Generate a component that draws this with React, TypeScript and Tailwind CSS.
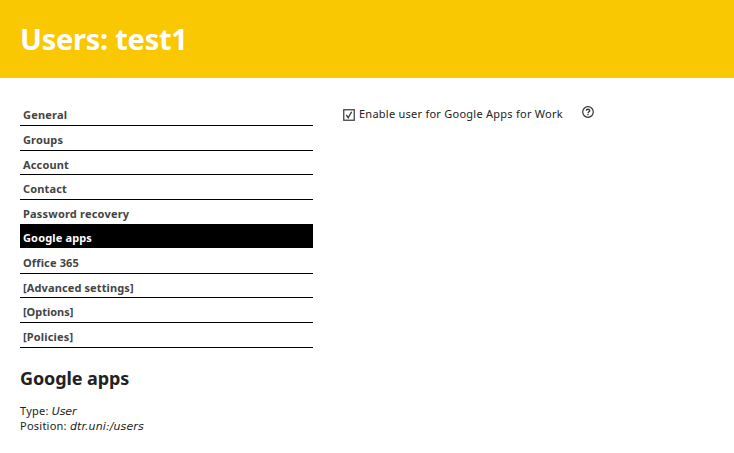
type Item = { label: string; row: string; text: string; active?: boolean };

const items: Item[] = [
  { label: "General", row: "h-[25px] pb-[2px]", text: "tracking-[0.2px]" },
  { label: "Groups", row: "h-[25px] pb-[2px]", text: "tracking-[0.15px]" },
  { label: "Account", row: "h-[24px] pb-[1px]", text: "tracking-[0.15px]" },
  { label: "Contact", row: "h-[25px] pb-[2px]", text: "tracking-[0.15px]" },
  { label: "Password recovery", row: "h-[24px] pb-[2px] border-b-0", text: "tracking-[0.2px]" },
  { label: "Google apps", row: "h-[24px] pb-[2px] mb-px border-b-0", text: "tracking-[0.15px]", active: true },
  { label: "Office 365", row: "h-[25px] pb-[2px]", text: "tracking-[0.15px]" },
  { label: "[Advanced settings]", row: "h-[24px] pb-[1px]", text: "tracking-[0.12px]" },
  { label: "[Options]", row: "h-[25px] pb-[2px]", text: "tracking-[-0.03px]" },
  { label: "[Policies]", row: "h-[25px] pb-[2px]", text: "tracking-[0.17px]" },
];

export default function App() {
  return (
    <div className="h-[453px] w-[734px] overflow-hidden bg-white font-['Noto_Sans',sans-serif] text-[11px] text-[#222222]">
      <header className="flex h-[78px] items-center bg-[#fac802] pl-5">
        <h1 className="whitespace-nowrap text-[29px] leading-[40px] font-bold tracking-[-0.25px] text-white">Users: test1</h1>
      </header>
      <div className="flex pl-5 pt-[23px]">
        <aside className="w-[293px]">
          <nav>
            {items.map((item) => (
              <a
                key={item.label}
                className={`flex items-end border-b border-black pl-[3px] font-bold whitespace-nowrap ${item.row} ${item.active ? "bg-black text-white" : "text-[#444444]"}`}
              >
                <span className={`leading-[16px] ${item.text}`}>{item.label}</span>
              </a>
            ))}
          </nav>
          <h2 className="mt-[17px] text-[18px] leading-[26px] font-bold tracking-[-0.1px] text-[#222222]">Google apps</h2>
          <div className="mt-[12px] leading-[15px] tracking-[0.24px]">
            <p className="h-[15px]">Type: <i className="font-['DejaVu_Sans',sans-serif] tracking-[-0.1px]">User</i></p>
            <p className="h-[15px]">Position: <i className="font-['DejaVu_Sans',sans-serif] tracking-[0.1px]">dtr.uni:/users</i></p>
          </div>
        </aside>
        <main className="flex items-start pl-[30px] pt-[5px]">
          <svg className="mt-[3px]" width="12" height="12" viewBox="0 0 12 12" fill="none">
            <rect x="0.75" y="0.75" width="10.5" height="10.5" stroke="#444" strokeWidth="1.3" />
            <path d="M3.3 5.8L5.2 8.8L8.6 2.8" stroke="#333" strokeWidth="1.3" />
          </svg>
          <label className="ml-1 w-[223px] leading-[16px] whitespace-nowrap tracking-[0.25px]">Enable user for Google Apps for Work</label>
          <svg width="12" height="12" viewBox="0 0 12 12" fill="none" stroke="#333">
            <circle cx="6" cy="6" r="5.3" strokeWidth="1.2" />
            <path d="M4.3 4.8C4.3 2.7 7.7 2.8 7.7 4.7C7.7 5.9 6 5.8 6 7.2M6 8V9.2" strokeWidth="1.3" />
          </svg>
        </main>
      </div>
    </div>
  );
}
